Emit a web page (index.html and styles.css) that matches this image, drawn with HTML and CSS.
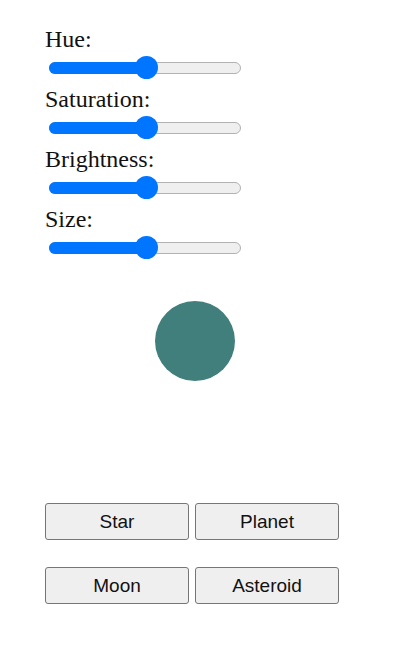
FILE: index.html
```html
<!DOCTYPE html>
<html>
<head>
<meta charset="utf-8">
<link rel="stylesheet" href="styles.css">
</head>
<body>
<div class="app">
  <div class="controls">
    <div class="row">
      <label class="label">Hue:</label>
      <div class="slider"><div class="track"><div class="fill"></div><div class="thumb"></div></div></div>
    </div>
    <div class="row">
      <label class="label">Saturation:</label>
      <div class="slider"><div class="track"><div class="fill"></div><div class="thumb"></div></div></div>
    </div>
    <div class="row">
      <label class="label">Brightness:</label>
      <div class="slider"><div class="track"><div class="fill"></div><div class="thumb"></div></div></div>
    </div>
    <div class="row">
      <label class="label">Size:</label>
      <div class="slider"><div class="track"><div class="fill"></div><div class="thumb"></div></div></div>
    </div>
  </div>
  <div class="stage"><div class="body"></div></div>
  <div class="buttons">
    <button class="btn">Star</button>
    <button class="btn">Planet</button>
    <button class="btn">Moon</button>
    <button class="btn">Asteroid</button>
  </div>
</div>
</body>
</html>
```
FILE: styles.css
```css
html, body { margin: 0; padding: 0; background: #fff; }
.app {
  padding: 25px 0 0 45px;
  width: 300px;
  font-family: "Liberation Serif", "Times New Roman", serif;
  color: #111;
}
.row { display: flex; flex-direction: column; height: 60px; }
.label { font-size: 24px; line-height: 28px; height: 28px; display: block; }
.slider { height: 32px; padding: 9px 0 0 4px; box-sizing: border-box; }
.track {
  position: relative;
  width: 192px; height: 12px;
  box-sizing: border-box;
  background: #efefef;
  border: 1px solid #b2b2b2;
  border-radius: 6px;
}
.fill {
  position: absolute; left: -1px; top: -1px; bottom: -1px;
  width: 98px;
  background: #0075ff;
  border-radius: 6px;
}
.thumb {
  position: absolute;
  left: 85px; top: -7px;
  width: 23px; height: 23px;
  border-radius: 50%;
  background: #0075ff;
}
.stage {
  display: flex; justify-content: center;
  padding-top: 36px;
  height: 202px;
}
.body {
  width: 80px; height: 80px;
  border-radius: 50%;
  background: #417f7d;
}
.buttons {
  display: grid;
  grid-template-columns: 144px 144px;
  column-gap: 6px;
  row-gap: 27px;
}
.btn {
  height: 37px;
  margin: 0;
  box-sizing: border-box;
  background: #efefef;
  border: 1px solid #767676;
  border-radius: 3px;
  font-family: "Liberation Sans", Arial, sans-serif;
  font-size: 19px;
  color: #111;
  padding: 0;
}
```
